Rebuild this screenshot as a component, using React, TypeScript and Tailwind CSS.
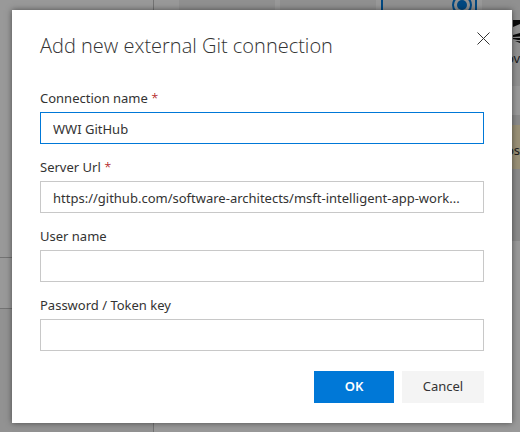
import { useState } from "react";

type FieldProps = {
  id: string;
  label: string;
  required?: boolean;
  type?: string;
  value: string;
  active?: boolean;
  onChange: (value: string) => void;
};

function Field({ id, label, required, type = "text", value, active, onChange }: FieldProps) {
  return (
    <div className="flex flex-col gap-1">
      <label htmlFor={id} className="text-[13px] leading-5">
        {label}
        {required && <span className="font-light text-[#a80000]"> *</span>}
      </label>
      <input
        id={id}
        type={type}
        value={value}
        onChange={(e) => onChange(e.target.value)}
        className={
          "h-8 w-full truncate border bg-white pt-px pr-2 pl-3 text-[13px] outline-none focus:border-[#0078d7] " +
          (active ? "border-[#0078d7]" : "border-[#c8c8c8]")
        }
      />
    </div>
  );
}

function Gallery() {
  return (
    <div aria-hidden="true" className="flex h-screen w-full overflow-hidden bg-white">
      <div className="flex w-[154px] shrink-0 flex-col border-r border-[#c0c0c0]">
        <div className="h-[257px]" />
        <div className="h-[52px] border-y border-[#c0c0c0]" />
        <div className="flex-1 bg-[#f4f4f4]" />
      </div>
      <div className="flex min-w-0 flex-1 gap-[5px] overflow-hidden pl-[25px]">
        <div className="h-[86px] w-24 shrink-0 bg-[#f0f0f0]" />
        <div className="h-[86px] w-24 shrink-0 bg-[#f0f0f0]" />
        <div className="flex h-[86px] w-24 shrink-0 justify-end border-x-2 border-[#0078d7] bg-[#f0f0f0] pr-[3px]">
          <svg viewBox="0 0 20 20" className="-mt-[5px] h-5 w-5">
            <circle cx="10" cy="10" r="9" fill="none" stroke="#0078d7" strokeWidth="2" />
            <circle cx="10" cy="10" r="5" fill="#0078d7" />
          </svg>
        </div>
        <div className="flex w-24 shrink-0 flex-col text-[13px] leading-5">
          <div className="h-[86px] bg-[#f0f0f0] pt-[18px] pl-6">
            <svg viewBox="0 0 30 26" className="h-[26px] w-[30px]" fill="#111">
              <path d="M7 2H30V7L14 6 7 9Z M7 17 14 15H30V17L7 19Z M7 20H30V22H12L7 21Z M9 23 30 24V25H14Z" />
            </svg>
            <p className="pt-1">ov</p>
          </div>
          <div className="h-[29px]" />
          <div className="h-[126px] bg-[#e6e6e6] pt-[10px]">
            <p className="h-11 bg-[#fff1c5] pt-[15px] pl-6">os</p>
          </div>
        </div>
      </div>
    </div>
  );
}

export default function App() {
  const [name, setName] = useState("WWI GitHub");
  const [url, setUrl] = useState("https://github.com/software-architects/msft-intelligent-app-work...");
  const [user, setUser] = useState("");
  const [token, setToken] = useState("");

  return (
    <div className="relative font-['Noto_Sans',sans-serif] text-[#333]">
      <Gallery />
      <div className="absolute inset-0 flex items-start bg-black/40 pt-[10px] pr-2 pl-3">
        <form
          role="dialog"
          aria-labelledby="title"
          className="flex w-full flex-col bg-white p-5 shadow-[0_0_6px_rgba(0,0,0,0.5)]"
          onSubmit={(e) => e.preventDefault()}
        >
          <div className="flex items-start justify-between pl-2">
            <h1 id="title" className="font-['Open_Sans',sans-serif] text-xl leading-8 font-light">
              Add new external Git connection
            </h1>
            <button type="button" aria-label="Close" className="p-0.5">
              <svg viewBox="0 0 13 13" className="h-[13px] w-[13px]" stroke="#333" fill="none">
                <path d="M.5 .5 12.5 12.5M12.5 .5 .5 12.5" />
              </svg>
            </button>
          </div>
          <div className="mt-[26px] flex flex-col gap-[13px] px-2">
            <Field id="name" label="Connection name" required value={name} onChange={setName} active />
            <Field id="url" label="Server Url" required value={url} onChange={setUrl} />
            <Field id="user" label="User name" value={user} onChange={setUser} />
            <Field id="token" label="Password / Token key" type="password" value={token} onChange={setToken} />
          </div>
          <div className="mt-5 flex justify-end gap-2 px-2">
            <button type="submit" className="h-8 w-20 bg-[#0078d7] text-[13px] font-semibold text-white">
              OK
            </button>
            <button type="button" className="h-8 w-[82px] bg-[#f4f4f4] text-[13px]">
              Cancel
            </button>
          </div>
        </form>
      </div>
    </div>
  );
}
